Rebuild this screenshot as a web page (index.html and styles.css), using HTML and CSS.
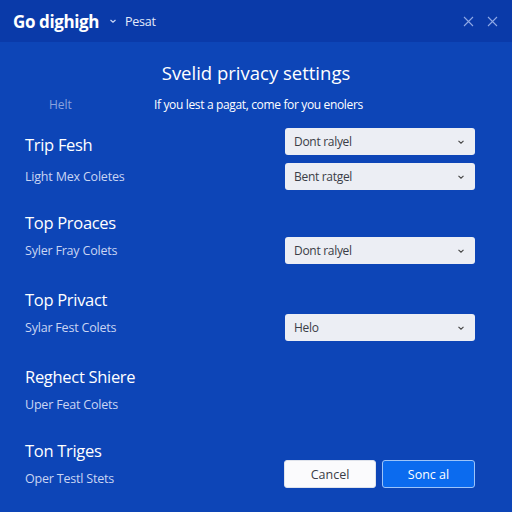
FILE: index.html
```html
<!DOCTYPE html>
<html>
<head>
<meta charset="utf-8">
<link rel="stylesheet" href="styles.css">
</head>
<body>
<header class="topbar">
  <div class="brand">
    <span class="app">Go dighigh</span>
    <svg class="caret" width="8" height="6" viewBox="0 0 8 6"><path d="M1.5 2 L4 4.2 L6.5 2" fill="none" stroke="#c9d6f5" stroke-width="1.2"/></svg>
    <span class="crumb">Pesat</span>
  </div>
  <div class="wins">
    <svg width="11" height="11" viewBox="0 0 11 11"><path d="M1 1 L10 10 M10 1 L1 10" stroke="#8fa9e6" stroke-width="1.1"/></svg>
    <svg width="11" height="11" viewBox="0 0 11 11"><path d="M1 1 L10 10 M10 1 L1 10" stroke="#8fa9e6" stroke-width="1.1"/></svg>
  </div>
</header>
<main class="panel">
  <h1 class="title">Svelid privacy settings</h1>
  <div class="intro"><span class="muted">Helt</span><span class="lead">If you lest a pagat, come for you enolers</span></div>

  <section class="group first">
    <div class="line"><h2>Trip Fesh</h2><div class="select"><span>Dont ralyel</span><svg width="8" height="6" viewBox="0 0 8 6"><path d="M1.5 1.8 L4 4.2 L6.5 1.8" fill="none" stroke="#444" stroke-width="1.1"/></svg></div></div>
    <div class="line"><p class="sub">Light Mex Coletes</p><div class="select"><span>Bent ratgel</span><svg width="8" height="6" viewBox="0 0 8 6"><path d="M1.5 1.8 L4 4.2 L6.5 1.8" fill="none" stroke="#444" stroke-width="1.1"/></svg></div></div>
  </section>

  <section class="group second">
    <h2>Top Proaces</h2>
    <div class="line"><p class="sub">Syler Fray Colets</p><div class="select"><span>Dont ralyel</span><svg width="8" height="6" viewBox="0 0 8 6"><path d="M1.5 1.8 L4 4.2 L6.5 1.8" fill="none" stroke="#444" stroke-width="1.1"/></svg></div></div>
  </section>

  <section class="group">
    <h2>Top Privact</h2>
    <div class="line"><p class="sub">Sylar Fest Colets</p><div class="select"><span>Helo</span><svg width="8" height="6" viewBox="0 0 8 6"><path d="M1.5 1.8 L4 4.2 L6.5 1.8" fill="none" stroke="#444" stroke-width="1.1"/></svg></div></div>
  </section>

  <section class="group">
    <h2>Reghect Shiere</h2>
    <div class="line"><p class="sub">Uper Feat Colets</p></div>
  </section>

  <section class="group last">
    <h2>Ton Triges</h2>
    <div class="line"><p class="sub">Oper Testl Stets</p>
      <div class="actions"><button class="btn ghost">Cancel</button><button class="btn primary">Sonc al</button></div>
    </div>
  </section>
</main>
</body>
</html>
```

FILE: styles.css
```css
* { box-sizing: border-box; }
html, body { margin: 0; padding: 0; }
body {
  width: 512px;
  height: 512px;
  overflow: hidden;
  background: #0d45b7;
  font-family: "Open Sans", "Noto Sans", sans-serif;
  color: #fff;
}
.topbar {
  height: 42px;
  background: #0a3aa9;
  display: flex;
  align-items: center;
  justify-content: space-between;
  padding: 0 13px 0 13px;
}
.brand { display: flex; align-items: center; }
.app { font-weight: 700; font-size: 17px; letter-spacing: -0.4px; }
.caret { margin: 0 8px 0 10px; }
.crumb { font-size: 12.5px; color: #e3eafa; letter-spacing: -0.2px; }
.wins { display: flex; gap: 13px; padding-right: 1px; }
.panel { padding: 0 37px 0 25px; }
.title {
  margin: 18px -12px 0 0;
  font-size: 18.5px;
  font-weight: 400;
  line-height: 26px;
  text-align: center;
}
.intro {
  display: flex;
  font-size: 12px;
  line-height: 16px;
  margin-top: 11px;
}
.muted { color: #8aa3dd; margin-left: 24px; width: 105px; }
.lead { color: #fff; letter-spacing: -0.35px; }
.group { margin-top: 24px; }
.group.first { margin-top: 15px; display: flex; flex-direction: column; gap: 8px; }
.group.second { margin-top: 21px; }
.group.last { margin-top: 21px; }
.group h2 {
  margin: 0;
  font-size: 16.5px;
  font-weight: 400;
  line-height: 24px;
  letter-spacing: -0.3px;
}
.group.first h2 { align-self: flex-end; line-height: 20px; }
.line {
  display: flex;
  align-items: center;
  justify-content: space-between;
  min-height: 27px;
  margin-top: 2px;
}
.group.first .line { margin-top: 0; }
.sub {
  margin: 0;
  font-size: 12.5px;
  color: #c9d5f3;
  letter-spacing: -0.2px;
}
.select {
  width: 190px;
  height: 27px;
  background: #eceef4;
  border-radius: 3px;
  display: flex;
  align-items: center;
  justify-content: space-between;
  padding: 0 10px 0 9px;
  color: #3a3d46;
  font-size: 12px;
  letter-spacing: -0.3px;
}
.actions { display: flex; gap: 6px; align-self: flex-start; margin-top: -5px; }
.btn {
  height: 28px;
  border-radius: 3px;
  font-family: inherit;
  font-size: 12.5px;
  padding: 0;
}
.ghost { width: 92px; background: #fbfbfd; border: 1px solid #dfe3ec; color: #3a3d46; }
.primary { width: 93px; background: #0b6bef; border: 1px solid #9cc4fa; color: #fff; }
```
